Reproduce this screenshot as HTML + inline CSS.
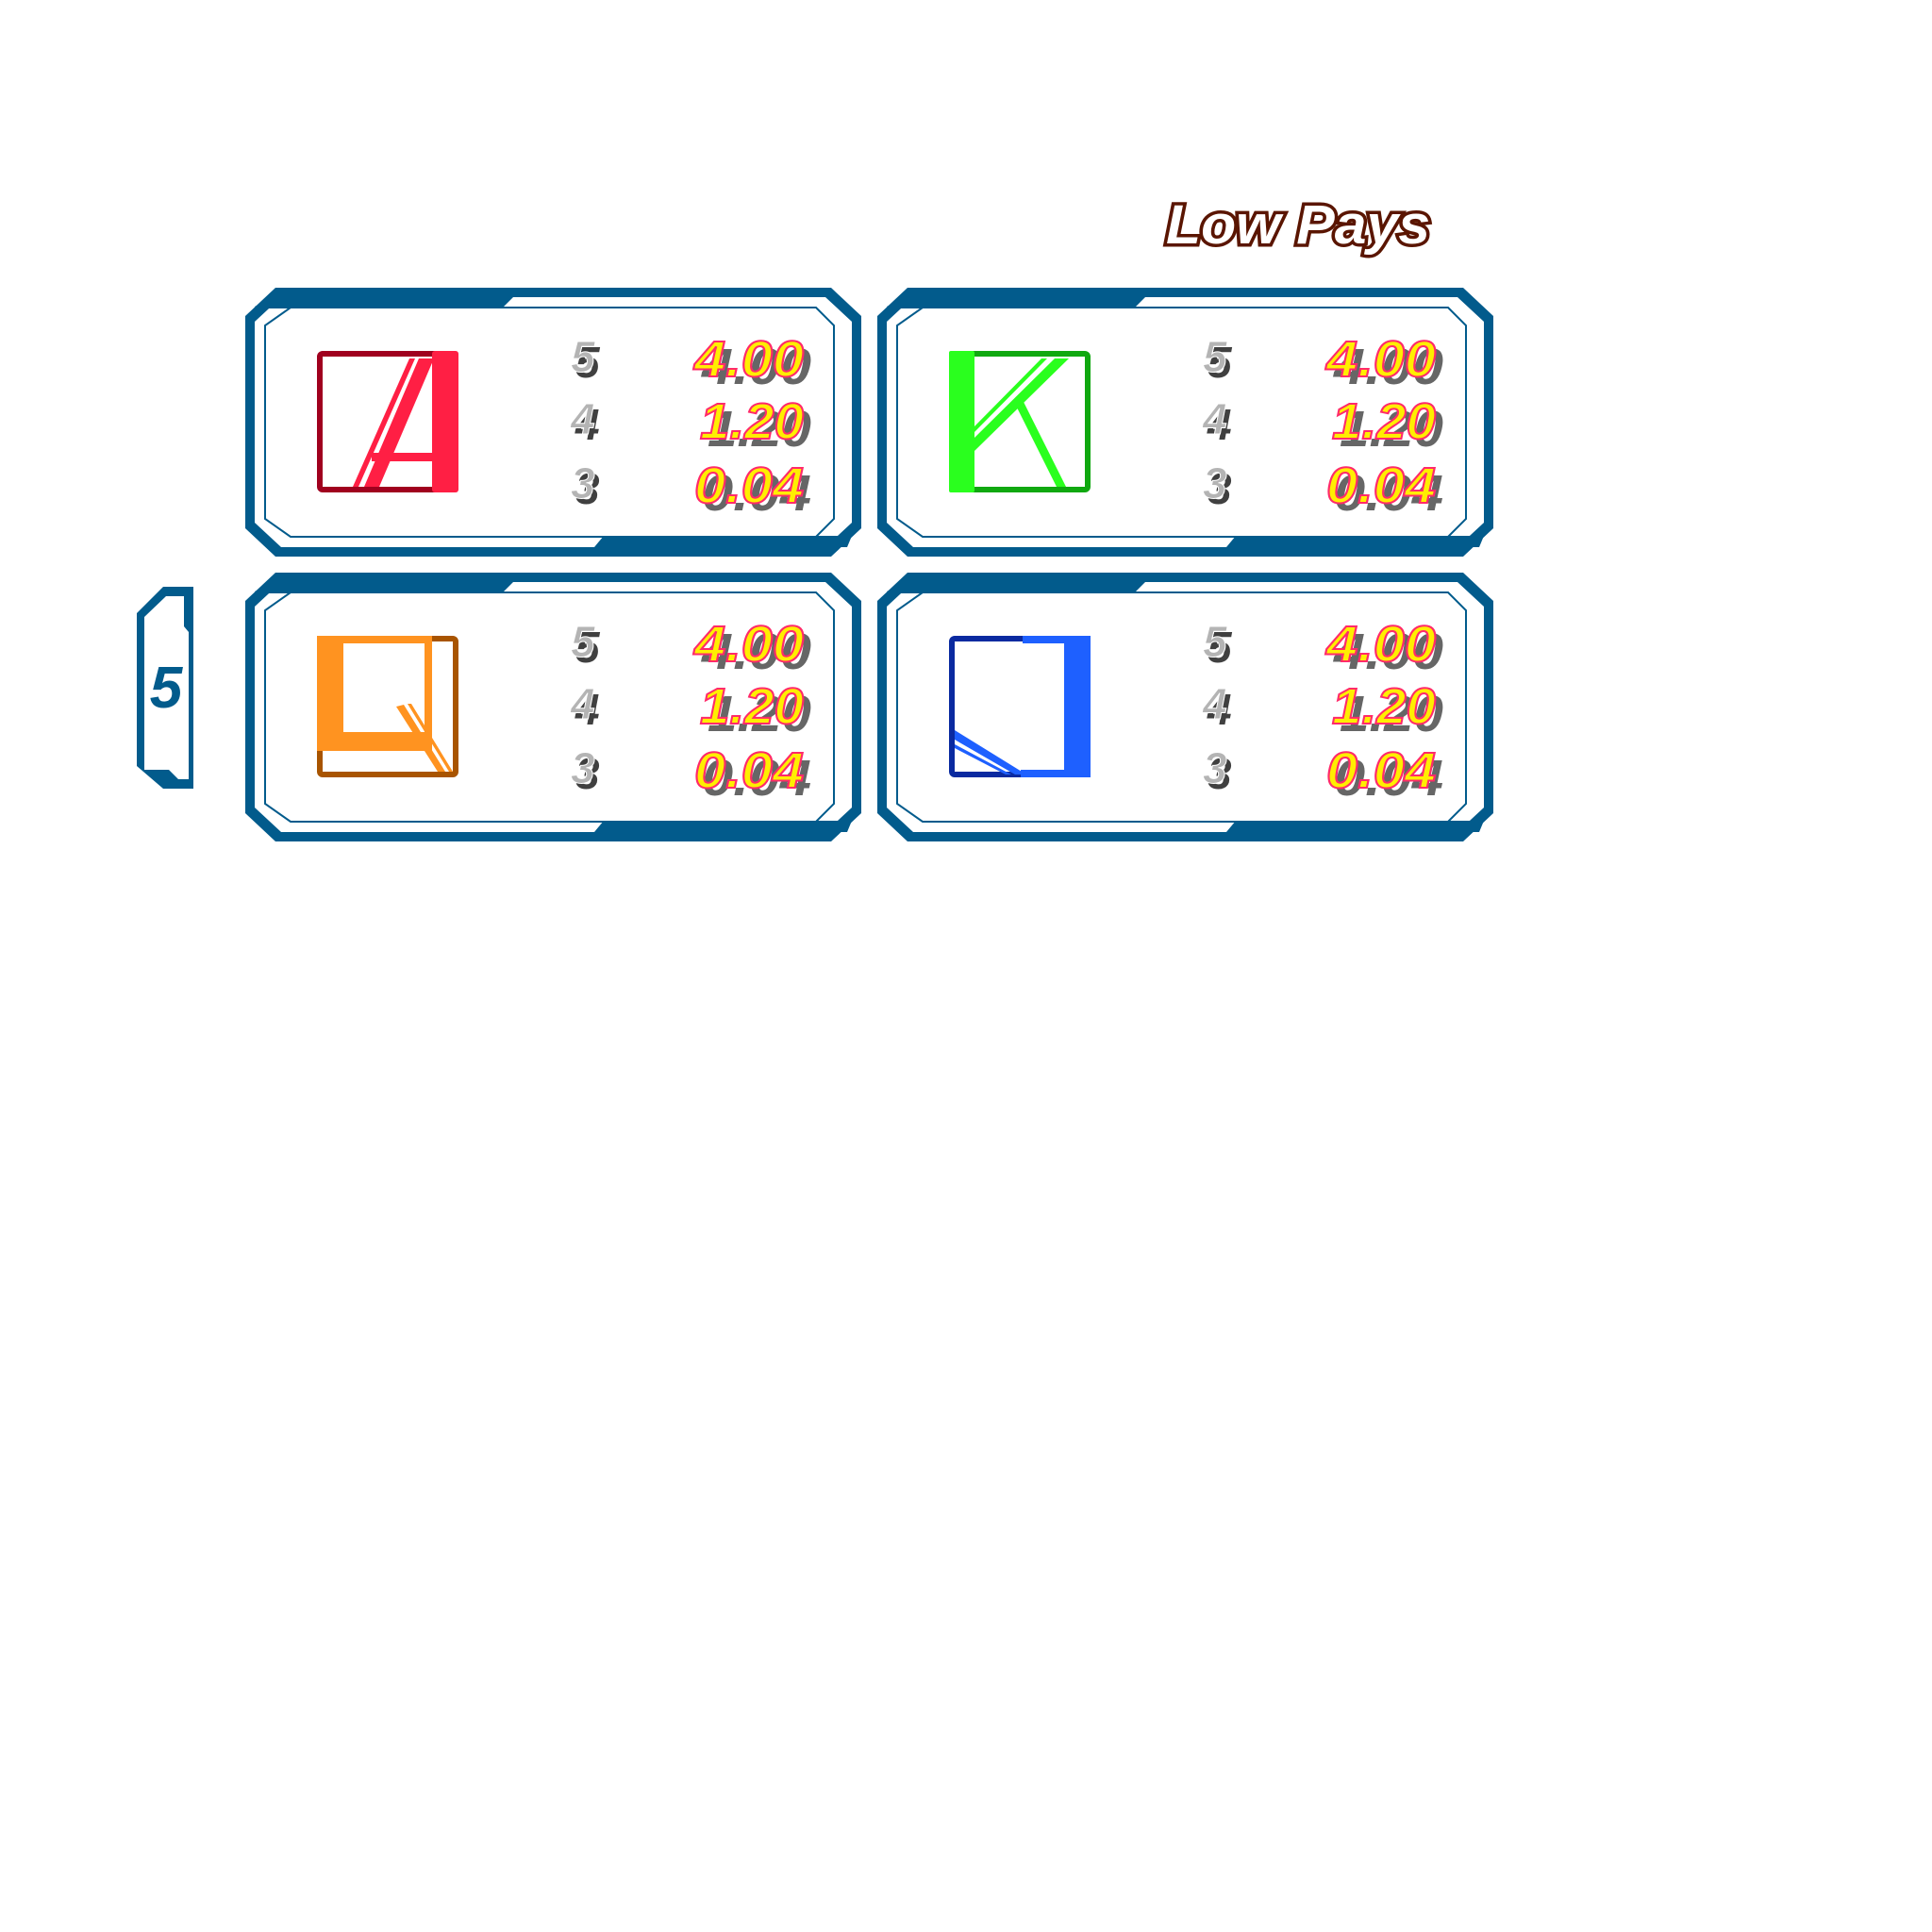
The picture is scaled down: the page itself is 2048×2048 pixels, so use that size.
<!DOCTYPE html>
<html><head><meta charset="utf-8"><style>
html,body{margin:0;padding:0;background:#fff;}
svg{display:block}
.num{font-family:"Liberation Sans",sans-serif;font-weight:bold;font-style:italic;font-size:54px;}
.lab{font-family:"Liberation Sans",sans-serif;font-weight:bold;font-style:italic;font-size:46px;}
</style></head><body>
<svg width="2048" height="2048" viewBox="0 0 2048 2048" xmlns="http://www.w3.org/2000/svg">
<defs>
<g id="panel">
  <path d="M32,0 H621 L653,30 V255 L621,285 H32 L0,255 V30 Z" fill="#025b8c"/>
  <path d="M38,10 H615 L643,36 V249 L615,275 H38 L10,249 V36 Z" fill="#fff"/>
  <path d="M30,10 H284 L272,22 H12 L10,20 Z" fill="#025b8c"/>
  <path d="M380,263 H643 L638,275 H370 Z" fill="#025b8c"/>
  <path d="M48,21 H605 L624,40 V245 L605,264 H48 L21,245 V40 Z" fill="none" stroke="#025b8c" stroke-width="2"/>
  <g class="lab">
    <text x="350" y="95" fill="#404040">5</text><text x="345" y="89" fill="#b4b4b4" stroke="#fff" stroke-width="1">5</text>
    <text x="350" y="161" fill="#404040">4</text><text x="345" y="155" fill="#b4b4b4" stroke="#fff" stroke-width="1">4</text>
    <text x="350" y="229" fill="#404040">3</text><text x="345" y="223" fill="#b4b4b4" stroke="#fff" stroke-width="1">3</text>
  </g>
  <g class="num">
    <text x="484" y="102" fill="#666" textLength="116" lengthAdjust="spacingAndGlyphs">4.00</text>
    <text x="476" y="94" fill="#ffee00" stroke="#ff2a6a" stroke-width="2" textLength="116" lengthAdjust="spacingAndGlyphs">4.00</text>
    <text x="490" y="168" fill="#666" textLength="110" lengthAdjust="spacingAndGlyphs">1.20</text>
    <text x="482" y="160" fill="#ffee00" stroke="#ff2a6a" stroke-width="2" textLength="110" lengthAdjust="spacingAndGlyphs">1.20</text>
    <text x="484" y="236" fill="#666" textLength="116" lengthAdjust="spacingAndGlyphs">0.04</text>
    <text x="476" y="228" fill="#ffee00" stroke="#ff2a6a" stroke-width="2" textLength="116" lengthAdjust="spacingAndGlyphs">0.04</text>
  </g>
</g>
</defs>

<text x="1236" y="258" font-family="Liberation Sans,sans-serif" font-weight="bold" font-style="italic" font-size="58" fill="#fff" stroke="#5a1500" stroke-width="7" paint-order="stroke" textLength="280" lengthAdjust="spacingAndGlyphs">Low  Pays</text>

<use href="#panel" x="260" y="305"/>
<use href="#panel" x="930" y="305"/>
<use href="#panel" x="260" y="607"/>
<use href="#panel" x="930" y="607"/>

<!-- A icon -->
<g transform="translate(336,372)">
  <rect x="3" y="3" width="144" height="144" rx="3" fill="none" stroke="#a0001e" stroke-width="6"/>
  <rect x="122" y="0" width="28" height="150" rx="3" fill="#ff1f44"/>
  <polygon points="50,144 66,144 124,8 108,8" fill="#ff1f44"/>
  <polygon points="38,144 44,144 104,8 98,8" fill="#ff1f44"/>
  <rect x="58" y="108" width="66" height="9" fill="#ff1f44"/>
</g>
<!-- K icon -->
<g transform="translate(1006,372)">
  <rect x="3" y="3" width="144" height="144" rx="3" fill="none" stroke="#10a810" stroke-width="6"/>
  <rect x="0" y="0" width="27" height="150" rx="2" fill="#2aff1e"/>
  <polygon points="27,92 27,106 127,8 112,8" fill="#2aff1e"/>
  <polygon points="27,80 27,86 104,8 98,8" fill="#2aff1e"/>
  <polygon points="70,56 78,52 124,144 114,144" fill="#2aff1e"/>
</g>
<!-- Q icon -->
<g transform="translate(336,674)">
  <rect x="3" y="3" width="144" height="144" rx="3" fill="none" stroke="#a85400" stroke-width="6"/>
  <rect x="0" y="0" width="122" height="8" fill="#ff9320"/>
  <rect x="0" y="0" width="28" height="122" fill="#ff9320"/>
  <rect x="114" y="0" width="8" height="122" fill="#ff9320"/>
  <rect x="0" y="102" width="122" height="20" fill="#ff9320"/>
  <polygon points="84,75 92,73 136,144 128,144" fill="#ff9320"/>
  <polygon points="96,72 100,72 144,144 140,144" fill="#ff9320"/>
</g>
<!-- J icon -->
<g transform="translate(1006,674)">
  <rect x="3" y="3" width="144" height="144" rx="3" fill="none" stroke="#0a2aa0" stroke-width="6"/>
  <rect x="78" y="0" width="72" height="8" fill="#1e60ff"/>
  <rect x="122" y="0" width="28" height="150" rx="2" fill="#1e60ff"/>
  <rect x="76" y="142" width="74" height="8" fill="#1e60ff"/>
  <polygon points="6,100 6,110 70,147 82,147" fill="#1e60ff"/>
  <polygon points="6,115 6,119 60,147 66,147" fill="#1e60ff"/>
</g>

<!-- left tab -->
<path d="M173,622 H205 V836 H173 L145,812 L145,650 Z" fill="#025b8c"/>
<path d="M176,632 H195 V664 L200,670 V826 H189 L179,816 H153 V654 Z" fill="#fff"/>
<text x="176" y="750" text-anchor="middle" font-family="Liberation Sans,sans-serif" font-weight="bold" font-style="italic" font-size="62" fill="#025b8c">5</text>
</svg>
</body></html>
